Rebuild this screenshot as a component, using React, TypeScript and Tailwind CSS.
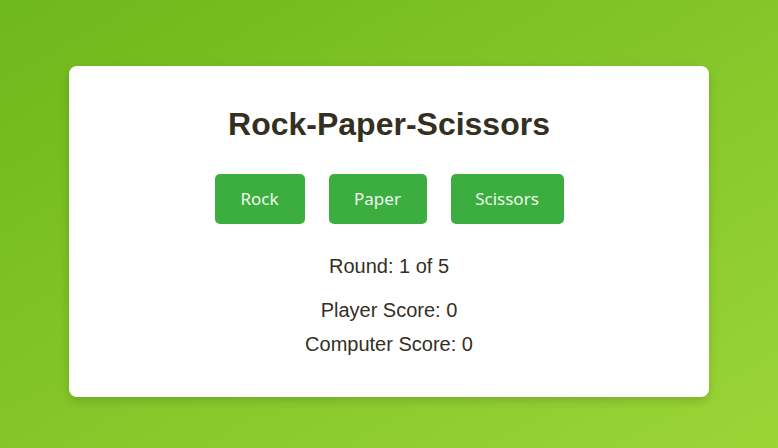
const choices = [
	{ label: "Rock", width: "w-[90px]" },
	{ label: "Paper", width: "w-[98px]" },
	{ label: "Scissors", width: "w-[113px]" },
];

export default function App() {
	return (
		<div className="flex h-[448px] w-full items-start justify-center bg-linear-to-br from-[#6eb71c] to-[#9ad536] pt-[66px]">
			<div className="flex w-[640px] flex-col items-center rounded-lg bg-white px-10 pt-10 pb-[41px] font-['Liberation_Sans',Arial,sans-serif] text-[#33301f] shadow-[0_4px_10px_rgba(0,0,0,0.15)]">
				<h1 className="text-[32px] leading-[37px] font-bold">Rock-Paper-Scissors</h1>
				<div className="mt-[31px] flex gap-6">
					{choices.map((c) => (
						<button
							key={c.label}
							className={`${c.width} h-[50px] rounded-[5px] bg-[#3cae3f] font-['Noto_Sans',sans-serif] text-[17px] leading-5 text-[#eef8ee]`}
						>
							{c.label}
						</button>
					))}
				</div>
				<p className="mt-[31px] text-xl leading-[23px]">Round: 1 of 5</p>
				<p className="mt-[21px] text-xl leading-[23px]">Player Score: 0</p>
				<p className="mt-[11px] text-xl leading-[23px]">Computer Score: 0</p>
			</div>
		</div>
	);
}
